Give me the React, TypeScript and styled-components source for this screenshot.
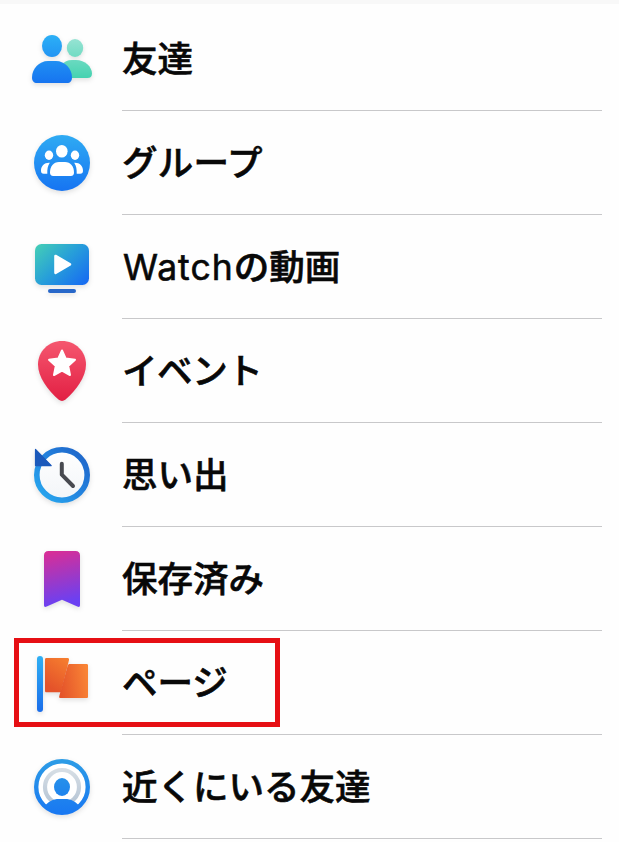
import React, { FC, ReactNode } from "react";
import styled, { createGlobalStyle } from "styled-components";

interface MenuItem {
  latin?: string;
  label: string;
  icon: ReactNode;
  spacing?: number;
  highlighted?: boolean;
}

const FriendsIcon = () => (
  <Icon viewBox="0 0 80 81">
    <defs>
      <linearGradient id="friendsBack" gradientUnits="userSpaceOnUse" x1="0" y1="21" x2="0" y2="60">
        <stop offset="0" stopColor="#96e3d3" />
        <stop offset="1" stopColor="#45d2b0" />
      </linearGradient>
      <linearGradient id="friendsFront" gradientUnits="userSpaceOnUse" x1="0" y1="17" x2="0" y2="65">
        <stop offset="0" stopColor="#2cb0f6" />
        <stop offset="1" stopColor="#1674f0" />
      </linearGradient>
    </defs>
    <g fill="url(#friendsBack)">
      <ellipse cx="53" cy="30" rx="8.2" ry="9" />
      <path d="M40 47C42 43.6 45.5 42 50 42H54C63 42 70 49 70 55.5C70 58.6 68.4 60 65.5 60H44Z" />
    </g>
    <g fill="url(#friendsFront)">
      <ellipse cx="30" cy="28" rx="10" ry="11" />
      <path d="M26 43H34C43 43 50 51 50 59.5C50 63 48.2 65 45 65H15C11.8 65 10 63 10 59.5C10 51 17 43 26 43Z" />
    </g>
  </Icon>
);

const GroupsIcon = () => (
  <Icon viewBox="0 0 80 81">
    <defs>
      <linearGradient id="groups" x1="0" y1="0" x2="0" y2="1">
        <stop offset="0" stopColor="#2fabf3" />
        <stop offset="1" stopColor="#1674f2" />
      </linearGradient>
    </defs>
    <circle cx="40" cy="41" r="28" fill="url(#groups)" />
    <g fill="#fff">
      <ellipse cx="39.8" cy="29.3" rx="5.8" ry="6.3" />
      <ellipse cx="27" cy="33.3" rx="4.2" ry="4.7" />
      <ellipse cx="53" cy="33.3" rx="4.2" ry="4.7" />
      <path d="M37 40H43C48.5 40 52 44.5 52 50.5C52 52.8 51 54 48.8 54H31.2C29 54 28 52.8 28 50.5C28 44.5 31.5 40 37 40Z" />
      <path d="M27.8 40.8C25.6 44 25.2 47 25.3 51.7H21.8C19.8 51.7 19 50.7 19 48.8C19 44 22.5 40.4 27.8 40.8Z" />
      <path d="M52.2 40.8C54.4 44 54.8 47 54.7 51.7H58.2C60.2 51.7 61 50.7 61 48.8C61 44 57.5 40.4 52.2 40.8Z" />
    </g>
  </Icon>
);

const WatchIcon = () => (
  <Icon viewBox="0 0 80 81">
    <defs>
      <linearGradient id="watch" gradientUnits="userSpaceOnUse" x1="17" y1="14" x2="62" y2="60">
        <stop offset="0" stopColor="#45d0b5" />
        <stop offset="0.5" stopColor="#279fd9" />
        <stop offset="1" stopColor="#176bf2" />
      </linearGradient>
    </defs>
    <rect x="13" y="18" width="54" height="41" rx="6.5" fill="url(#watch)" />
    <path d="M33.5 30L48 38.3L33.5 46.8Z" fill="#fff" stroke="#fff" strokeWidth="2.6" strokeLinejoin="round" />
    <rect x="26" y="63" width="28" height="4" rx="2" fill="#2767c9" />
  </Icon>
);

const EventsIcon = () => (
  <Icon viewBox="0 0 80 81">
    <defs>
      <linearGradient id="events" x1="0" y1="0" x2="0" y2="1">
        <stop offset="0" stopColor="#f5576f" />
        <stop offset="1" stopColor="#e21f43" />
      </linearGradient>
    </defs>
    <path
      d="M40 11C26.5 11 16 21.5 16 34.5C16 47 26 60.5 36.5 69.6C38.8 71.5 41.2 71.5 43.5 69.6C54 60.5 64 47 64 34.5C64 21.5 53.5 11 40 11Z"
      fill="url(#events)"
    />
    <path
      d="M40 20.5L43.7 28.6L53 29.8L46.2 36L48 45L40 40.6L32 45L33.8 36L27 29.8L36.3 28.6Z"
      fill="#fff"
      stroke="#fff"
      strokeWidth="2"
      strokeLinejoin="round"
    />
  </Icon>
);

const MemoriesIcon = () => (
  <Icon viewBox="0 0 80 81">
    <defs>
      <linearGradient id="memories" gradientUnits="userSpaceOnUse" x1="18" y1="62" x2="60" y2="20">
        <stop offset="0" stopColor="#27a6ee" />
        <stop offset="0.5" stopColor="#2384df" />
        <stop offset="1" stopColor="#1f68cb" />
      </linearGradient>
      <linearGradient id="memoriesFace" x1="0" y1="0" x2="0" y2="1">
        <stop offset="0" stopColor="#ffffff" />
        <stop offset="1" stopColor="#f2f5f8" />
      </linearGradient>
    </defs>
    <circle cx="40" cy="41" r="25.2" fill="url(#memoriesFace)" stroke="url(#memories)" strokeWidth="5.6" />
    <path d="M13.5 15.4L29.2 31.6H13.5Z" fill="#1b59bb" stroke="#1b59bb" strokeWidth="1.2" strokeLinejoin="round" />
    <path d="M39.8 29.8V40.7L51 52" fill="none" stroke="#484a50" strokeWidth="4" strokeLinecap="round" strokeLinejoin="round" />
  </Icon>
);

const SavedIcon = () => (
  <Icon viewBox="0 0 80 81">
    <defs>
      <linearGradient id="saved" gradientUnits="userSpaceOnUse" x1="34" y1="13" x2="46" y2="64">
        <stop offset="0" stopColor="#d72e98" />
        <stop offset="0.5" stopColor="#a038c4" />
        <stop offset="1" stopColor="#6b40f2" />
      </linearGradient>
    </defs>
    <path
      d="M26.5 13H53.5C56.5 13 58 14.5 58 17.5V67C58 69 57 69.4 55.3 68.5L40 61.7L24.7 68.5C23 69.4 22 69 22 67V17.5C22 14.5 23.5 13 26.5 13Z"
      fill="url(#saved)"
    />
  </Icon>
);

const PagesIcon = () => (
  <Icon viewBox="0 0 80 81">
    <defs>
      <linearGradient id="pagesPole" x1="0" y1="0" x2="0" y2="1">
        <stop offset="0" stopColor="#2fb0f4" />
        <stop offset="1" stopColor="#1a6dea" />
      </linearGradient>
      <linearGradient id="pagesLeft" x1="1" y1="0" x2="0.5" y2="1">
        <stop offset="0" stopColor="#f7802f" />
        <stop offset="1" stopColor="#e4532a" />
      </linearGradient>
      <linearGradient id="pagesRight" x1="0" y1="0.6" x2="1" y2="0.4">
        <stop offset="0" stopColor="#e4532a" />
        <stop offset="1" stopColor="#f98435" />
      </linearGradient>
    </defs>
    <rect x="15" y="14" width="6" height="56" rx="3" fill="url(#pagesPole)" />
    <path d="M24.5 16H45.6C46.8 16 47.3 16.8 47 18L39 50.3H24.5C23.5 50.3 23 49.8 23 48.8V17.5C23 16.5 23.5 16 24.5 16Z" fill="url(#pagesLeft)" />
    <path d="M47.8 22H64.5C65.5 22 66 22.5 66 23.5V54.5C66 55.5 65.5 56 64.5 56H38.5C37.4 56 36.9 55.4 37.2 54.2L45.7 23.6C46 22.5 46.7 22 47.8 22Z" fill="url(#pagesRight)" />
  </Icon>
);

const NearbyIcon = () => (
  <Icon viewBox="0 0 80 81">
    <defs>
      <linearGradient id="nearby" gradientUnits="userSpaceOnUse" x1="0" y1="13" x2="0" y2="69">
        <stop offset="0" stopColor="#2d9de6" />
        <stop offset="1" stopColor="#1877f2" />
      </linearGradient>
      <linearGradient id="nearbyRing" x1="0" y1="0" x2="0" y2="1">
        <stop offset="0" stopColor="#d6dee5" />
        <stop offset="1" stopColor="#b6c5d5" />
      </linearGradient>
      <clipPath id="nearbyClip">
        <circle cx="40" cy="41" r="26" />
      </clipPath>
    </defs>
    <circle cx="40" cy="41" r="25.8" fill="#fff" stroke="url(#nearby)" strokeWidth="4.4" />
    <circle cx="40" cy="41" r="17" fill="none" stroke="url(#nearbyRing)" strokeWidth="4.2" />
    <ellipse cx="40" cy="41" rx="8" ry="9" fill="url(#nearby)" />
    <path
      d="M22 61C26 55.5 31 53 37 53H43C49 53 54 55.5 58 61V70H22Z"
      fill="url(#nearby)"
      clipPath="url(#nearbyClip)"
    />
  </Icon>
);

const items: MenuItem[] = [
  { label: "友達", icon: <FriendsIcon /> },
  { label: "グループ", icon: <GroupsIcon />, spacing: 0.2 },
  { latin: "Watch", label: "の動画", icon: <WatchIcon /> },
  { label: "イベント", icon: <EventsIcon />, spacing: -0.4 },
  { label: "思い出", icon: <MemoriesIcon /> },
  { label: "保存済み", icon: <SavedIcon /> },
  { label: "ページ", icon: <PagesIcon />, highlighted: true },
  { label: "近くにいる友達", icon: <NearbyIcon /> },
];

const App: FC = () => {
  return (
    <Page>
      <GlobalStyle />
      <TopEdge />
      <List>
        {items.map(({ latin, label, icon, spacing, highlighted }) => (
          <Row key={label}>
            {icon}
            <LabelCell>
              <Label $spacing={spacing}>
                {latin && <Latin>{latin}</Latin>}
                {label}
              </Label>
            </LabelCell>
            {highlighted && <Highlight />}
          </Row>
        ))}
      </List>
    </Page>
  );
};

export default App;

const GlobalStyle = createGlobalStyle`
  * {
    box-sizing: border-box;
  }

  body {
    margin: 0;
    background: #fefefe;
    overflow: hidden;
  }
`;

const Page = styled.main`
  width: 100%;
  height: 842px;
  background: #fefefe;
  color: #080808;
  font-family: Inter, "Noto Sans CJK JP", sans-serif;
`;

const TopEdge = styled.div`
  height: 4px;
  margin-bottom: 3px;
  background: #f8f8f8;
`;

const List = styled.ul`
  margin: 0;
  padding: 0;
  list-style: none;
`;

const Row = styled.li`
  position: relative;
  display: flex;
  height: 104px;
  padding: 0 17px 0 22px;
`;

const Icon = styled.svg`
  flex: none;
  width: 80px;
  height: 81px;
  margin: 11px 20px 0 0;
  filter: drop-shadow(0 2px 2.5px rgba(0, 0, 0, 0.12));
`;

const LabelCell = styled.div`
  flex: 1;
  display: flex;
  align-items: center;
  padding-top: 3px;
  border-bottom: 1px solid #c8c8ca;
`;

const Label = styled.span<{ $spacing?: number }>`
  font-size: 35.5px;
  font-weight: 500;
  line-height: 52px;
  letter-spacing: ${(p) => p.$spacing ?? 0}px;
  white-space: nowrap;
  -webkit-text-stroke: 0.6px #080808;
`;

const Latin = styled.span`
  margin-left: 1px;
  font-weight: 400;
  letter-spacing: 1px;
`;

const Highlight = styled.div`
  position: absolute;
  top: 7px;
  left: 14px;
  width: 266px;
  height: 89px;
  border: 5px solid #e60f14;
`;
